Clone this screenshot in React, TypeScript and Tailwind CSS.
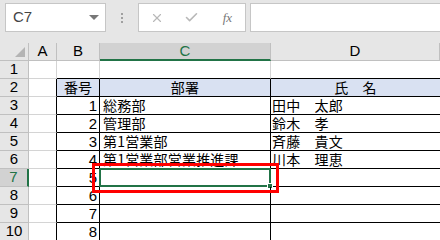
import React from 'react';
import { X, Check } from 'lucide-react';

const cols = ['A', 'B', 'C', 'D'];

const rows: { b?: string; c?: string; d?: string; head?: boolean }[] = [
    {},
    { b: '番号', c: '部署', d: '氏　名', head: true },
    { b: '1', c: '総務部', d: '田中　太郎' },
    { b: '2', c: '管理部', d: '鈴木　孝' },
    { b: '3', c: '第1営業部', d: '斉藤　貴文' },
    { b: '4', c: '第1営業部営業推進課', d: '川本　理恵' },
    { b: '5' },
    { b: '6' },
    { b: '7' },
    { b: '8' },
];

const jp = "font-['Noto_Sans_CJK_JP','Noto_Sans_CJK_SC',sans-serif]";

const App: React.FC = () => {
    return (
        <div className="w-[440px] h-[240px] overflow-hidden bg-[#e6e6e6] font-['Liberation_Sans',Arial,sans-serif] text-black">
            {/* formula bar */}
            <div className="h-[43px] flex items-start pt-[3px] pl-[5px]">
                <div className="w-[101px] h-[29px] bg-white border border-[#c6c6c6] flex items-center justify-between pl-[7px] pr-[6px]">
                    <span className="text-[15px] text-[#444]">C7</span>
                    <span className="w-0 h-0 border-l-[5px] border-r-[5px] border-t-[5px] border-l-transparent border-r-transparent border-t-[#777]"></span>
                </div>
                <div className="w-[32px] h-[29px] flex flex-col items-center justify-center gap-[2px]">
                    <span className="w-[2px] h-[2px] bg-[#a0a0a0]"></span>
                    <span className="w-[2px] h-[2px] bg-[#a0a0a0]"></span>
                    <span className="w-[2px] h-[2px] bg-[#a0a0a0]"></span>
                </div>
                <div className="w-[108px] h-[29px] bg-white border border-[#c6c6c6] flex items-center">
                    <div className="w-[36px] flex justify-center"><X className="w-[14px] h-[14px] text-[#b8b8b8]" strokeWidth={2} /></div>
                    <div className="w-[36px] flex justify-center"><Check className="w-[15px] h-[15px] text-[#b8b8b8]" strokeWidth={2.5} /></div>
                    <div className="w-[36px] flex justify-center font-['Liberation_Serif',serif] italic text-[13px] text-[#777]">fx</div>
                </div>
                <div className="ml-[4px] flex-1 h-[29px] bg-white border border-[#c6c6c6] border-r-0"></div>
            </div>

            {/* sheet */}
            <div className="relative bg-white">
                <div className="grid grid-cols-[29px_28px_43px_171px_169px] auto-rows-[18px]">
                    {/* header row */}
                    <div className="bg-[#e6e6e6] border-r border-b border-[#c0c0c0] flex items-end justify-end pr-[3px] pb-[3px]">
                        <svg className="block shrink-0" width="10" height="10" viewBox="0 0 10 10">
                            <polygon points="10,0 10,10 0,10" fill="#b4b4b4" />
                        </svg>
                    </div>
                    {cols.map((c) => (
                        <div
                            key={c}
                            className={
                                c === 'C'
                                    ? 'bg-[#d2d2d2] border-r border-r-[#c0c0c0] border-b-2 border-b-[#217346] text-[#217346] flex items-center justify-center text-[15px]'
                                    : 'bg-[#e6e6e6] border-r border-b border-[#c0c0c0] flex items-center justify-center text-[15px]'
                            }
                        >
                            {c}
                        </div>
                    ))}

                    {rows.map((r, i) => {
                        const n = i + 1;
                        const sel = n === 7;
                        const inTable = n >= 2;
                        const rightCls = inTable ? 'border-r-black' : 'border-r-[#d4d4d4]';
                        const bg = r.head ? 'bg-[#d9e1f2]' : '';
                        return (
                            <React.Fragment key={n}>
                                <div
                                    className={
                                        sel
                                            ? 'bg-[#d2d2d2] border-b border-b-[#c0c0c0] border-r-2 border-r-[#217346] text-[#217346] flex items-center justify-center text-[15px]'
                                            : 'bg-[#e6e6e6] border-r border-b border-[#c0c0c0] flex items-center justify-center text-[15px]'
                                    }
                                >
                                    {n}
                                </div>
                                <div className={`border-b border-b-[#d4d4d4] border-r ${rightCls}`}></div>
                                <div className={`border-b border-r ${rightCls} border-b-black ${bg} flex items-end pb-[1px] ${r.head ? `justify-center ${jp} text-[14px] leading-[15px]` : 'justify-end pr-[2px] text-[15px] leading-[15px]'}`}>
                                    {r.b}
                                </div>
                                <div className={`relative border-b border-r ${rightCls} border-b-black ${bg} flex items-end pb-[1px] ${jp} text-[14px] tracking-[0.2px] leading-[15px] whitespace-nowrap ${r.head ? 'justify-center' : 'pl-[3px]'}`}>
                                    {r.c}
                                    {sel && (
                                        <div className="absolute left-[-1px] top-[-1px] right-[-1px] bottom-[-1px] border-2 border-[#217346]">
                                            <span className="absolute right-[-4px] bottom-[-4px] w-[6px] h-[6px] bg-[#217346] border border-white"></span>
                                        </div>
                                    )}
                                </div>
                                <div className={`border-b border-b-black ${bg} flex items-end pb-[1px] ${jp} text-[14px] tracking-[0.2px] leading-[15px] whitespace-nowrap ${r.head ? 'justify-center' : 'pl-[1px]'}`}>
                                    {r.d}
                                </div>
                            </React.Fragment>
                        );
                    })}
                </div>

                {/* red annotation box */}
                <div className="absolute left-[92px] top-[120px] w-[187px] h-[30px] border-[3px] border-[#ff0000]"></div>
            </div>
        </div>
    );
};

export default App;
